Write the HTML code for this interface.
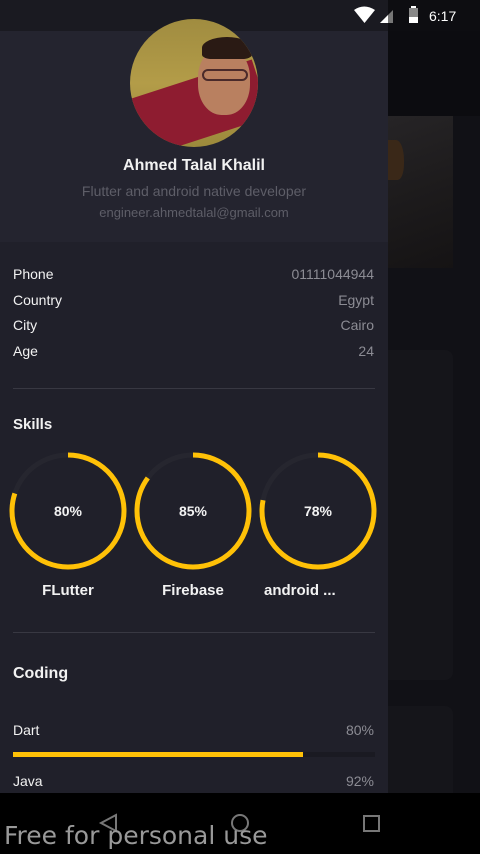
<!DOCTYPE html>
<html><head><meta charset="utf-8"><style>
*{margin:0;padding:0;box-sizing:border-box}
body{width:480px;height:854px;overflow:hidden;background:#111116;font-family:"Liberation Sans",sans-serif;position:relative}
.a{position:absolute}
.w{color:#f2f2f2}
.g{color:#8c8c94}
</style></head><body>
<div class="a" style="left:388px;top:31px;width:92px;height:85px;background:#0c0c10"></div>
<div class="a" style="left:388px;top:116px;width:65px;height:152px;background:linear-gradient(160deg,#262426,#1d1b1c 50%,#151314)"></div>
<div class="a" style="left:388px;top:140px;width:16px;height:40px;background:#3a2818;border-radius:0 50% 40% 0"></div>
<div class="a" style="left:388px;top:350px;width:65px;height:330px;background:#15151a;border-radius:0 8px 8px 0"></div>
<div class="a" style="left:388px;top:706px;width:65px;height:90px;background:#15151a;border-radius:0 8px 0 0"></div>
<div class="a" style="left:0;top:0;width:388px;height:31px;background:#1a1a21"></div>
<div class="a" style="left:388px;top:0;width:92px;height:31px;background:#0d0d11"></div>
<svg class="a" style="left:352px;top:5px" width="110" height="20">
<path d="M2 5 Q12 -2 23 5 L12.5 18 Z" fill="#fff"/>
<path d="M28 18 L41 5 L41 18 Z" fill="#777"/><path d="M28 18 L36 10 L36 18 Z" fill="#fff"/>
<rect x="57" y="3" width="9" height="15" fill="#888"/><rect x="59" y="1" width="5" height="2" fill="#fff"/><rect x="57" y="12" width="9" height="6" fill="#fff"/>
<text x="77" y="16" fill="#fff" font-size="14" font-family="Liberation Sans">6:17</text>
</svg>
<div class="a" style="left:0;top:31px;width:388px;height:762px;background:#20202a"></div>
<div class="a" style="left:0;top:31px;width:388px;height:211px;background:#24242f"></div>
<div class="a" style="left:130px;top:19px;width:128px;height:128px;border-radius:50%;overflow:hidden;background:linear-gradient(180deg,#a08c40 0%,#b39c48 50%,#9c8a3c 100%)">
<div class="a" style="left:0;top:80px;width:128px;height:60px;background:#8e1c30;transform:rotate(-18deg);transform-origin:left top"></div>
<div class="a" style="left:68px;top:28px;width:52px;height:68px;border-radius:45%;background:#b98060"></div>
<div class="a" style="left:72px;top:18px;width:50px;height:22px;border-radius:50% 50% 20% 20%;background:#2a1a14"></div>
<div class="a" style="left:72px;top:50px;width:46px;height:12px;border:2px solid #4a2a2a;border-radius:6px"></div>
</div>
<div class="a w" style="left:0;top:157px;width:388px;text-align:center;font-size:16px;font-weight:bold">Ahmed Talal Khalil</div>
<div class="a" style="left:0;top:183px;width:388px;text-align:center;font-size:14px;color:#5e5e68">Flutter and android native developer</div>
<div class="a" style="left:0;top:205px;width:388px;text-align:center;font-size:13px;color:#5e5e68">engineer.ahmedtalal@gmail.com</div>
<div class="a w" style="left:13px;top:262px;font-size:14px;line-height:25.5px">Phone<br>Country<br>City<br>Age</div>
<div class="a g" style="right:106px;top:262px;font-size:14px;line-height:25.5px;text-align:right">01111044944<br>Egypt<br>Cairo<br>24</div>
<div class="a" style="left:13px;top:388px;width:362px;height:1px;background:#383842"></div>
<div class="a w" style="left:13px;top:416px;font-size:15px;font-weight:bold">Skills</div>
<svg class="a" style="left:0;top:440px" width="388" height="140">
<g fill="none" stroke-width="5">
<circle cx="68" cy="71" r="56" stroke="#26262f"/>
<circle cx="68" cy="71" r="56" stroke="#ffc107" stroke-dasharray="281.5 400" transform="rotate(-90 68 71)"/>
<circle cx="193" cy="71" r="56" stroke="#26262f"/>
<circle cx="193" cy="71" r="56" stroke="#ffc107" stroke-dasharray="299 400" transform="rotate(-90 193 71)"/>
<circle cx="318" cy="71" r="56" stroke="#26262f"/>
<circle cx="318" cy="71" r="56" stroke="#ffc107" stroke-dasharray="274.5 400" transform="rotate(-90 318 71)"/>
</g>
<g fill="#f2f2f2" font-size="14" font-weight="bold" text-anchor="middle" font-family="Liberation Sans">
<text x="68" y="76">80%</text><text x="193" y="76">85%</text><text x="318" y="76">78%</text>
</g></svg>
<div class="a w" style="left:18px;top:582px;width:100px;text-align:center;font-size:15px;font-weight:bold">FLutter</div>
<div class="a w" style="left:143px;top:582px;width:100px;text-align:center;font-size:15px;font-weight:bold">Firebase</div>
<div class="a w" style="left:264px;top:582px;font-size:15px;font-weight:bold">android ...</div>
<div class="a" style="left:13px;top:632px;width:362px;height:1px;background:#383842"></div>
<div class="a w" style="left:13px;top:665px;font-size:16px;font-weight:bold">Coding</div>
<div class="a w" style="left:13px;top:722px;font-size:14px">Dart</div>
<div class="a g" style="right:106px;top:722px;font-size:14px">80%</div>
<div class="a" style="left:13px;top:752px;width:362px;height:5px;background:#1a1a22"></div>
<div class="a" style="left:13px;top:752px;width:290px;height:5px;background:#ffc107"></div>
<div class="a w" style="left:13px;top:773px;font-size:14px">Java</div>
<div class="a g" style="right:106px;top:773px;font-size:14px">92%</div>
<div class="a" style="left:0;top:793px;width:480px;height:61px;background:#000"></div>
<svg class="a" style="left:0;top:793px" width="480" height="61">
<path d="M116 22 L101 30 L116 38 Z" fill="none" stroke="#777" stroke-width="2"/>
<circle cx="240" cy="30" r="8" fill="none" stroke="#777" stroke-width="2"/>
<rect x="364" y="23" width="15" height="15" fill="none" stroke="#777" stroke-width="2"/>
</svg>
<div class="a" style="left:4px;top:821px;font-family:'DejaVu Sans',sans-serif;font-size:25px;color:#999">Free for personal use</div>
</body></html>
